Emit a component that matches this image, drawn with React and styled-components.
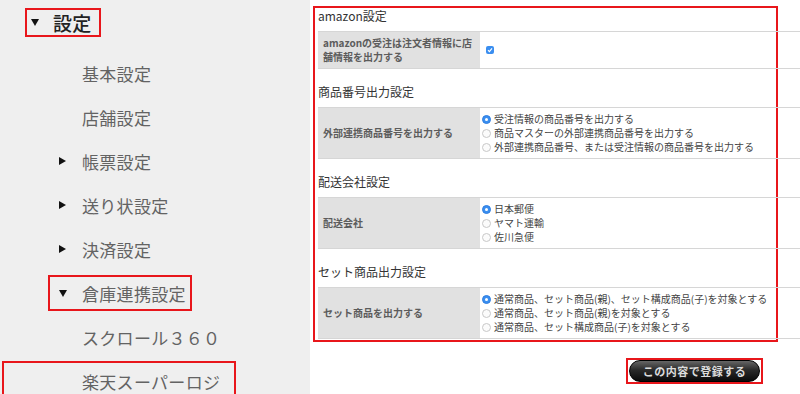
import React from 'react';
import styled, { createGlobalStyle } from 'styled-components';

const GlobalStyle = createGlobalStyle`
  html, body { margin: 0; padding: 0; background: #fff; }
  body { font-family: "Noto Sans CJK JP", "Noto Sans", sans-serif; }
  * { box-sizing: border-box; }
`;

const RED = '#e8161b';

const Page = styled.div`
  display: flex;
  width: 800px;
  height: 394px;
  overflow: hidden;
`;

/* ---------- sidebar ---------- */

const Sidebar = styled.nav`
  width: 310px;
  flex-shrink: 0;
  background: #efefef;
  padding-top: 8px;
`;

const NavRow = styled.div`
  display: flex;
  align-items: center;
  height: ${p => p.$h}px;
  margin-bottom: ${p => p.$mb || 0}px;
  padding-left: ${p => p.$indent}px;
`;

const NavLabel = styled.div`
  display: flex;
  align-items: center;
  height: ${p => p.$boxH}px;
  width: ${p => (p.$w ? `${p.$w}px` : 'auto')};
  padding: 0 ${p => p.$pr}px 0 ${p => p.$pl}px;
  border: 2px solid ${p => (p.$boxed ? RED : 'transparent')};
  font-size: ${p => (p.$top ? 19 : 17)}px;
  font-weight: ${p => (p.$top ? 500 : 400)};
  color: ${p => (p.$top ? '#222' : '#636363')};
  letter-spacing: 0.3px;
  white-space: nowrap;
`;

const ArrowSlot = styled.span`
  width: ${p => p.$w}px;
  flex-shrink: 0;
  display: flex;
  align-items: center;
`;

const Arrow = styled.span`
  width: 0;
  height: 0;
  ${p =>
    p.$open
      ? `border-left: 4px solid transparent;
         border-right: 4px solid transparent;
         border-top: 7px solid #111;`
      : `border-top: 4px solid transparent;
         border-bottom: 4px solid transparent;
         border-left: 7px solid #111;`}
`;

const nav = [
  { text: '設定', arrow: 'open', top: true, boxed: true, h: 29, mb: 14, indent: 25, pl: 4, pr: 7, boxH: 29, slot: 22 },
  { text: '基本設定', indent: 48, pl: 9, pr: 6, boxH: 36, slot: 23 },
  { text: '店舗設定', indent: 48, pl: 9, pr: 6, boxH: 36, slot: 23 },
  { text: '帳票設定', arrow: 'closed', indent: 48, pl: 9, pr: 6, boxH: 36, slot: 23 },
  { text: '送り状設定', arrow: 'closed', indent: 48, pl: 9, pr: 6, boxH: 36, slot: 23 },
  { text: '決済設定', arrow: 'closed', indent: 48, pl: 9, pr: 6, boxH: 36, slot: 23 },
  { text: '倉庫連携設定', arrow: 'open', boxed: true, indent: 48, pl: 9, pr: 4, boxH: 36, slot: 23 },
  { text: 'スクロール３６０', indent: 48, pl: 9, pr: 6, boxH: 36, slot: 23 },
  { text: '楽天スーパーロジ', boxed: true, indent: 2, pl: 78, pr: 6, boxH: 40, w: 234, slot: 0 },
];

/* ---------- main form ---------- */

const Main = styled.main`
  flex: 1;
  padding-top: 6px;
`;

const Highlight = styled.div`
  margin-left: 3px;
  width: 465px;
  height: 336px;
  border: 2px solid ${RED};
  padding: 0 0 2px 3px;
`;

const Section = styled.section`
  padding-top: 15px;
  &:first-child { padding-top: 0; }
`;

const SectionTitle = styled.h3`
  margin: 0 0 7px;
  font-size: 12px;
  line-height: 16px;
  font-weight: 400;
  color: #333;
`;

const FieldRow = styled.div`
  display: grid;
  grid-template-columns: 162px 1fr;
  width: 482px;
  border-top: 1px solid #d6d6d6;
  border-bottom: 1px solid #d6d6d6;
`;

const FieldLabel = styled.div`
  display: flex;
  align-items: center;
  background: #e1e1e1;
  padding: 4px 6px 4px 5px;
  font-size: 10px;
  line-height: 14px;
  font-weight: 700;
  color: #5c5c5c;
`;

const FieldValue = styled.div`
  display: flex;
  flex-direction: column;
  justify-content: center;
  padding: 4px 2px;
`;

const Option = styled.label`
  display: flex;
  align-items: center;
  gap: 3px;
  font-size: 10px;
  line-height: 14px;
  color: #444;
  white-space: nowrap;
`;

const Radio = styled.span`
  width: 9px;
  height: 9px;
  border-radius: 50%;
  flex-shrink: 0;
  display: flex;
  align-items: center;
  justify-content: center;
  background: ${p => (p.$checked ? '#3a8ef0' : '#fbfbfb')};
  border: 1px solid ${p => (p.$checked ? '#2f7fe0' : '#c8c8c8')};
  &::after {
    content: '';
    width: 3px;
    height: 3px;
    border-radius: 50%;
    background: ${p => (p.$checked ? '#fff' : 'transparent')};
  }
`;

const Checkbox = styled.span`
  width: 8px;
  height: 8px;
  margin-left: 4px;
  border-radius: 2px;
  background: #3a8ef0;
  display: flex;
  align-items: center;
  justify-content: center;
`;

const ButtonBar = styled.div`
  display: flex;
  justify-content: flex-end;
  margin-top: 16px;
  padding-right: 37px;
`;

const ButtonFrame = styled.span`
  display: inline-flex;
  border: 2px solid ${RED};
  padding: 0 1px;
`;

const SubmitButton = styled.button`
  width: 131px;
  height: 22px;
  border-radius: 11px;
  border: 1px solid #000;
  background: linear-gradient(#666 0%, #2a2a2a 45%, #0a0a0a 100%);
  color: #dcdcdc;
  font-family: inherit;
  font-size: 11px;
  font-weight: 700;
  letter-spacing: 0.5px;
  padding: 0;
  cursor: pointer;
`;

const sections = [
  {
    title: 'amazon設定',
    label: ['amazonの受注は注文者情報に店', '舗情報を出力する'],
    checkbox: true,
  },
  {
    title: '商品番号出力設定',
    label: ['外部連携商品番号を出力する'],
    options: [
      '受注情報の商品番号を出力する',
      '商品マスターの外部連携商品番号を出力する',
      '外部連携商品番号、または受注情報の商品番号を出力する',
    ],
  },
  {
    title: '配送会社設定',
    label: ['配送会社'],
    options: ['日本郵便', 'ヤマト運輸', '佐川急便'],
  },
  {
    title: 'セット商品出力設定',
    label: ['セット商品を出力する'],
    options: [
      '通常商品、セット商品(親)、セット構成商品(子)を対象とする',
      '通常商品、セット商品(親)を対象とする',
      '通常商品、セット構成商品(子)を対象とする',
    ],
  },
];

const App = () => {
  return (
    <Page>
      <GlobalStyle />
      <Sidebar>
        {nav.map(item => (
          <NavRow key={item.text} $h={item.h || 44} $mb={item.mb} $indent={item.indent}>
            <NavLabel
              $boxed={item.boxed}
              $top={item.top}
              $boxH={item.boxH}
              $pl={item.pl}
              $pr={item.pr}
              $w={item.w}
            >
              {item.slot > 0 && (
                <ArrowSlot $w={item.slot}>
                  {item.arrow && <Arrow $open={item.arrow === 'open'} />}
                </ArrowSlot>
              )}
              {item.text}
            </NavLabel>
          </NavRow>
        ))}
      </Sidebar>

      <Main>
        <Highlight>
          {sections.map(sec => (
            <Section key={sec.title}>
              <SectionTitle>{sec.title}</SectionTitle>
              <FieldRow>
                <FieldLabel>
                  <div>
                    {sec.label.map(l => (
                      <div key={l}>{l}</div>
                    ))}
                  </div>
                </FieldLabel>
                <FieldValue>
                  {sec.checkbox && (
                    <Checkbox>
                      <svg width="6" height="6" viewBox="0 0 6 6">
                        <path d="M1 3.2 L2.4 4.6 L5 1.4" fill="none" stroke="#fff" strokeWidth="1.2" />
                      </svg>
                    </Checkbox>
                  )}
                  {sec.options &&
                    sec.options.map((o, i) => (
                      <Option key={o}>
                        <Radio $checked={i === 0} />
                        {o}
                      </Option>
                    ))}
                </FieldValue>
              </FieldRow>
            </Section>
          ))}
        </Highlight>
        <ButtonBar>
          <ButtonFrame>
            <SubmitButton>この内容で登録する</SubmitButton>
          </ButtonFrame>
        </ButtonBar>
      </Main>
    </Page>
  );
};

export default App;
